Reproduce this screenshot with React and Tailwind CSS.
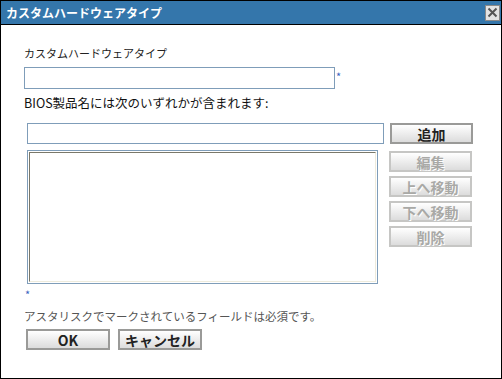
const JP = "font-['Noto_Sans_CJK_JP',sans-serif]"

function Btn({ children, disabled, className = '' }) {
  return (
    <div
      className={
        'h-[21px] flex items-center justify-center border-2 bg-linear-to-b from-white to-[#dcdcdc] text-[14px] font-bold leading-none ' +
        (disabled
          ? 'border-[#c6c6c4] text-[#a9a9a6] [text-shadow:1px_1px_0_#ffffff] '
          : 'border-[#9a9a98] text-[#222] ') +
        className
      }
    >
      {children}
    </div>
  )
}

export default function App() {
  return (
    <div className={`w-[502px] h-[379px] bg-white border border-black flex flex-col ${JP}`}>
      {/* title bar */}
      <div className="h-[24px] shrink-0 bg-[#3476ab] border-b border-black flex items-center justify-between pl-[5px] pr-[1px]">
        <span className="text-white text-[12px] font-bold leading-none">カスタムハードウェアタイプ</span>
        <div className="w-[15px] h-[16px] bg-[#e4e4e4] border border-[#8a8a8a] flex items-center justify-center">
          <svg width="11" height="11" viewBox="0 0 11 11">
            <path d="M1.5 1.5 L9.5 9.5 M9.5 1.5 L1.5 9.5" stroke="#555" strokeWidth="2" />
          </svg>
        </div>
      </div>

      {/* body */}
      <div className="flex-1 flex flex-col pl-[23px]">
        <div className="mt-[21px] text-[11px] leading-[14px] text-[#222]">カスタムハードウェアタイプ</div>

        <div className="mt-[7px] flex items-start">
          <div className="w-[311px] h-[22px] border border-[#7f9db9] bg-white" />
          <span className="ml-[1px] mt-[4px] text-[11px] leading-none text-[#3a62c0]">*</span>
        </div>

        <div className="mt-[6px] text-[12.5px] leading-[16px] text-[#111]">BIOS製品名には次のいずれかが含まれます:</div>

        <div className="mt-[12px] ml-[3px] flex items-start gap-[6px]">
          <div className="w-[357px] h-[21px] border border-[#7f9db9] bg-white" />
          <Btn className="w-[83px]">追加</Btn>
        </div>

        <div className="mt-[6px] ml-[3px] flex items-start">
          <div className="w-[351px] h-[134px] border border-[#7f9db9] p-px">
            <div className="w-full h-full border border-t-[#7a786a] border-l-[#7a786a] border-r-[#eeebdc] border-b-[#eeebdc]" />
          </div>
          <div className="ml-[11px] mt-[1px] w-[83px] flex flex-col gap-[4px]">
            <Btn disabled>編集</Btn>
            <Btn disabled>上へ移動</Btn>
            <Btn disabled>下へ移動</Btn>
            <Btn disabled>削除</Btn>
          </div>
        </div>

        <div className="mt-[6px] ml-[1px] text-[11px] leading-[9px] text-[#3a62c0]">*</div>

        <div className="mt-[10px] text-[11.5px] leading-[14px] text-[#555]">アスタリスクでマークされているフィールドは必須です。</div>

        <div className="mt-[6px] ml-[2px] flex gap-[8px]">
          <Btn className="w-[84px]">OK</Btn>
          <Btn className="w-[84px]">キャンセル</Btn>
        </div>
      </div>
    </div>
  )
}
